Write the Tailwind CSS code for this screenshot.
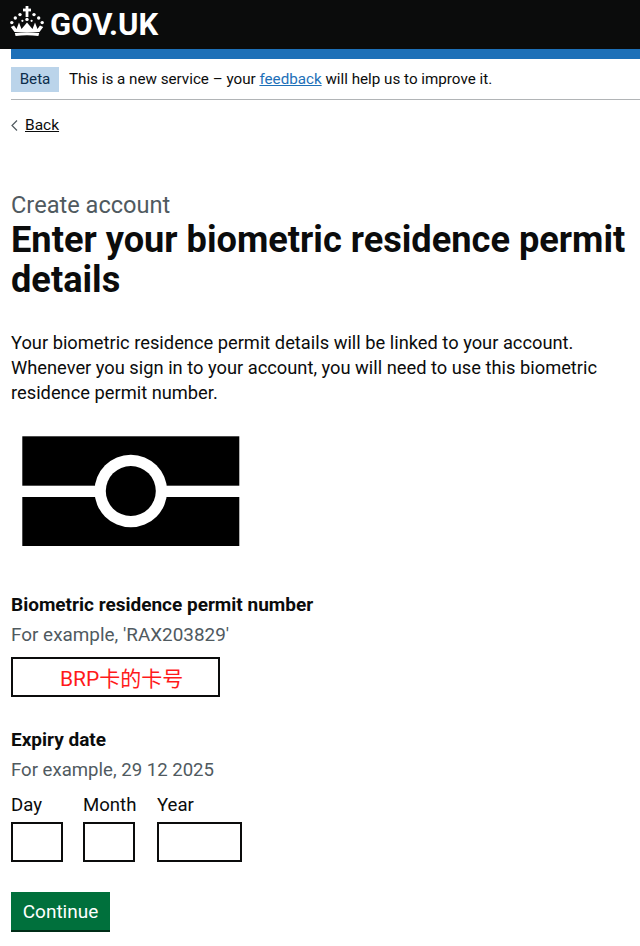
<!DOCTYPE html>
<html lang="en">
<head>
    <meta charset="UTF-8">
    <title>Enter your biometric residence permit details</title>
    <script src="https://cdn.jsdelivr.net/npm/@tailwindcss/browser@4"></script>
</head>
<body class="bg-white text-[#0b0c0c] font-['Roboto','Noto_Sans_CJK_SC',sans-serif]">
    <!-- cabecera -->
    <header class="h-[49px] bg-[#0b0c0c] flex items-center pl-[10px] gap-[6px] text-white">
        <svg class="w-[34px] h-[30px] -mt-[7px]" viewBox="0 0 34 30" fill="white">
            <rect x="15.6" y="0" width="2.8" height="11"/><rect x="13" y="2.6" width="8" height="2.8"/>
            <circle cx="10" cy="8.6" r="1.7"/><circle cx="24" cy="8.6" r="1.7"/>
            <circle cx="5.3" cy="12" r="1.7"/><circle cx="28.7" cy="12" r="1.7"/>
            <circle cx="1.8" cy="16.6" r="1.7"/><circle cx="32.2" cy="16.6" r="1.7"/>
            <circle cx="17" cy="13.4" r="1.7"/>
            <circle cx="12.4" cy="14.8" r="1.1"/><circle cx="21.6" cy="14.8" r="1.1"/>
            <path d="M0.8 21 L4 19.5 L6.5 23 L9 16.5 L11.5 23 L14.5 19.5 L17 16.5 L19.5 19.5 L22.5 23 L25 16.5 L27.5 23 L30 19.5 L33.2 21 L29.5 26 H4.5 Z"/>
            <path d="M4.8 27 Q17 25.4 29.2 27 L28.4 30 Q17 28.6 5.6 30 Z"/>
        </svg>
        <span class="text-[31px] font-bold leading-none">GOV.UK</span>
    </header>
    <div class="ml-[11px] h-[10px] bg-[#1d70b8]"></div>

    <main class="px-[11px]">
        <!-- aviso beta -->
        <div class="flex items-center gap-[10px] pt-[8px] pb-[7px] border-b border-[#b1b4b6] h-[41px] -mr-[11px] text-[15.2px]">
            <span class="w-[48px] h-[25px] flex items-center justify-center bg-[#bbd4ea] text-[#0c2d4a]">Beta</span>
            <p>This is a new service – your <a href="#" class="underline text-[#1d70b8]">feedback</a> will help us to improve it.</p>
        </div>

        <a href="#" class="flex items-center gap-[7px] mt-[15px] text-[15.5px] leading-[20px]">
            <svg class="w-[7px] h-[11px]" viewBox="0 0 7 11" fill="none" stroke="#505a5f" stroke-width="1.2"><path d="M6 0.5 L1 5.5 L6 10.5"/></svg>
            <span class="underline">Back</span>
        </a>

        <p class="mt-[55px] text-[23.6px] leading-[30px] text-[#505a5f]">Create account</p>
        <h1 class="text-[36.2px] leading-[40px] font-bold">Enter your biometric residence permit details</h1>

        <p class="mt-[30px] text-[18.3px] leading-[25px]">Your biometric residence permit details will be linked to your account. Whenever you sign in to your account, you will need to use this biometric residence permit number.</p>

        <svg class="mt-[31px] ml-[11px] w-[229px] h-[110px]" viewBox="0 0 229 110">
            <rect x="0.3" y="0.3" width="217" height="110"/>
            <rect y="49.7" width="218" height="11.3" fill="white"/>
            <circle cx="108.8" cy="55" r="36.3" fill="white"/>
            <circle cx="108.8" cy="55" r="25"/>
        </svg>

        <label class="block mt-[46px] text-[19px] leading-[25px] font-bold">Biometric residence permit number</label>
        <p class="mt-[5px] text-[18.9px] leading-[25px] text-[#505a5f]">For example, 'RAX203829'</p>
        <div class="mt-[10px] w-[209px] h-[40px] border-2 border-[#0b0c0c] flex items-center pl-[47px] pt-[6px] text-[21px] text-[#ff1a1a]">BRP卡的卡号</div>

        <label class="block mt-[30px] text-[19px] leading-[25px] font-bold">Expiry date</label>
        <p class="mt-[6px] text-[18.6px] leading-[25px] text-[#505a5f]">For example, 29 12 2025</p>
        <div class="mt-[10px] flex">
            <div class="w-[72px]">
                <label class="block text-[18.6px] leading-[25px]">Day</label>
                <div class="mt-[4px] w-[52px] h-[40px] border-2 border-[#0b0c0c]"></div>
            </div>
            <div class="w-[74px]">
                <label class="block text-[18.6px] leading-[25px]">Month</label>
                <div class="mt-[4px] w-[52px] h-[40px] border-2 border-[#0b0c0c]"></div>
            </div>
            <div>
                <label class="block text-[18.6px] leading-[25px]">Year</label>
                <div class="mt-[4px] w-[85px] h-[40px] border-2 border-[#0b0c0c]"></div>
            </div>
        </div>

        <button class="mt-[30px] w-[99px] h-[40px] bg-[#00703c] border-b-2 border-[#002d18] text-white text-[19px] leading-none">Continue</button>
    </main>
</body>
</html>
